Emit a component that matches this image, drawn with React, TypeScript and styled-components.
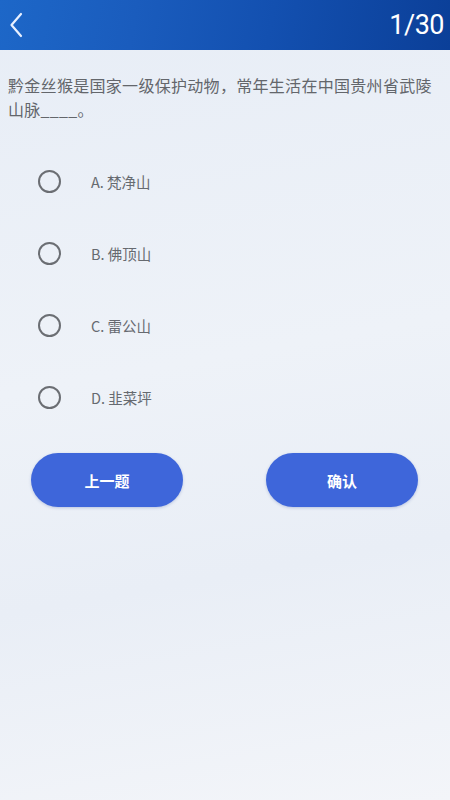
import * as React from 'react';
import styled, { createGlobalStyle } from 'styled-components';

const GlobalStyle = createGlobalStyle`
  html, body {
    margin: 0;
    padding: 0;
  }
  body {
    font-family: "Noto Sans", "Noto Sans CJK SC", sans-serif;
  }
`;

const Page = styled.div`
  width: 450px;
  height: 800px;
  overflow: hidden;
  display: flex;
  flex-direction: column;
  background: linear-gradient(170deg, #e7edf6 0%, #eef2f8 45%, #e9eef6 70%, #f3f5f9 100%);
`;

const Header = styled.div`
  height: 50px;
  flex-shrink: 0;
  display: flex;
  align-items: center;
  justify-content: space-between;
  padding: 0 6px 0 6px;
  background: linear-gradient(100deg, #1d67c8 0%, #1a5cbd 30%, #1350b0 60%, #0b3f98 100%);
  box-sizing: border-box;
`;

const BackButton = styled.button`
  border: none;
  background: transparent;
  padding: 0;
  width: 20px;
  height: 30px;
  display: flex;
  align-items: center;
  justify-content: center;
  cursor: pointer;
`;

const Counter = styled.div`
  color: #ffffff;
  font-family: Roboto, "Noto Sans", sans-serif;
  font-size: 27px;
  font-weight: 400;
  letter-spacing: -0.5px;
`;

const Question = styled.p`
  margin: 0;
  padding: 23px 10px 0 8px;
  color: #63666b;
  font-size: 16px;
  letter-spacing: 0.3px;
  line-height: 24px;
  font-family: "Noto Sans CJK SC", sans-serif;
`;

const Options = styled.div`
  display: flex;
  flex-direction: column;
  gap: 36px;
  padding: 42px 0 0 38px;
`;

const OptionRow = styled.label`
  display: flex;
  align-items: center;
  height: 36px;
  cursor: pointer;
`;

const Radio = styled.span<{ $checked?: boolean }>`
  width: 23px;
  height: 23px;
  border-radius: 50%;
  border: 2px solid #6b6e73;
  box-sizing: border-box;
  margin-right: 30px;
  flex-shrink: 0;
  background: ${(p) => (p.$checked ? '#3f67d9' : 'transparent')};
`;

const OptionText = styled.span`
  color: #666a70;
  font-size: 14.5px;
  font-family: "Noto Sans CJK SC", sans-serif;
`;

const ButtonRow = styled.div`
  display: flex;
  justify-content: space-between;
  padding: 38px 32px 0 31px;
`;

const ActionButton = styled.button`
  width: 152px;
  height: 54px;
  border: none;
  border-radius: 27px;
  background: #3e66da;
  color: #ffffff;
  font-size: 15px;
  font-weight: 700;
  font-family: "Noto Sans CJK SC", sans-serif;
  box-shadow: 0 1px 3px rgba(40, 70, 160, 0.25);
  cursor: pointer;
`;

const options = ['A. 梵净山', 'B. 佛顶山', 'C. 雷公山', 'D. 韭菜坪'];

const App = () => {
  const [selected, setSelected] = React.useState<number | null>(null);
  return (
    <>
      <GlobalStyle />
      <Page>
        <Header>
          <BackButton>
            <svg width="14" height="26" viewBox="0 0 14 26">
              <path d="M12 2 L2.5 13 L12 24" fill="none" stroke="#e8f0ff" strokeWidth="2.2" strokeLinecap="round" strokeLinejoin="round" />
            </svg>
          </BackButton>
          <Counter>1/30</Counter>
        </Header>
        <Question>黔金丝猴是国家一级保护动物，常年生活在中国贵州省武陵山脉____。</Question>
        <Options>
          {options.map((text, i) => (
            <OptionRow key={text} onClick={() => setSelected(i)}>
              <Radio $checked={selected === i} />
              <OptionText>{text}</OptionText>
            </OptionRow>
          ))}
        </Options>
        <ButtonRow>
          <ActionButton>上一题</ActionButton>
          <ActionButton>确认</ActionButton>
        </ButtonRow>
      </Page>
    </>
  );
};

export default App;
